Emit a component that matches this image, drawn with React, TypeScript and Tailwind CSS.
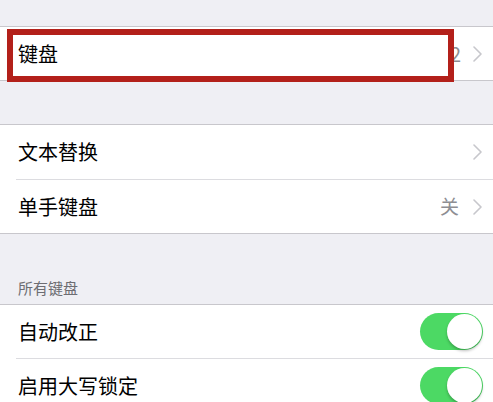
import React from "react";

const Chevron = () => (
  <svg width="9" height="16" viewBox="0 0 9 16" className="shrink-0">
    <path d="M1 1 L8 8 L1 15" fill="none" stroke="#c7c7cc" strokeWidth="1.6" strokeLinecap="round" strokeLinejoin="round" />
  </svg>
);

const Toggle = () => (
  <div className="w-[63px] h-[37px] rounded-full bg-[#4cd964] flex items-center justify-end px-[1px] shrink-0">
    <div className="w-[35px] h-[35px] rounded-full bg-white shadow-[0_2px_3px_rgba(0,0,0,0.25)]" />
  </div>
);

export default function App() {
  return (
    <div
      className="w-[493px] h-[402px] bg-[#efeff4] overflow-hidden relative"
      style={{ fontFamily: '"Noto Sans CJK SC", "Noto Sans", sans-serif' }}
    >
      <div className="h-[26px]" />
      {/* group 1 */}
      <div className="bg-white border-y border-[#c8c7cc]">
        <div className="h-[53px] flex items-center pl-[18px] pr-[11px]">
          <span className="text-[20px] text-black flex-1">键盘</span>
          <span className="text-[20px] text-[#8e8e93] mr-[12px]">2</span>
          <Chevron />
        </div>
      </div>
      <div className="h-[43px]" />
      {/* group 2 */}
      <div className="bg-white border-y border-[#c8c7cc]">
        <div className="h-[54px] flex items-center pl-[18px] pr-[11px]">
          <span className="text-[20px] text-black flex-1">文本替换</span>
          <Chevron />
        </div>
        <div className="ml-[16px] border-t border-[#dcdce0]" />
        <div className="h-[53px] flex items-center pl-[18px] pr-[11px]">
          <span className="text-[20px] text-black flex-1">单手键盘</span>
          <span className="text-[19px] text-[#8e8e93] mr-[14px]">关</span>
          <Chevron />
        </div>
      </div>
      {/* header */}
      <div className="h-[70px] flex items-end pl-[18px] pb-[5px]">
        <span className="text-[15px] text-[#6d6d72]">所有键盘</span>
      </div>
      {/* group 3 */}
      <div className="bg-white border-t border-[#c8c7cc]">
        <div className="h-[53px] flex items-center pl-[18px] pr-[10px]">
          <span className="text-[20px] text-black flex-1">自动改正</span>
          <Toggle />
        </div>
        <div className="ml-[16px] border-t border-[#dcdce0]" />
        <div className="h-[53px] flex items-center pl-[18px] pr-[10px]">
          <span className="text-[20px] text-black flex-1">启用大写锁定</span>
          <Toggle />
        </div>
      </div>
      {/* annotation box */}
      <div className="absolute left-[7px] top-[29px] w-[447px] h-[53px] border-[6px] border-[#b3201a]" />
    </div>
  );
}
